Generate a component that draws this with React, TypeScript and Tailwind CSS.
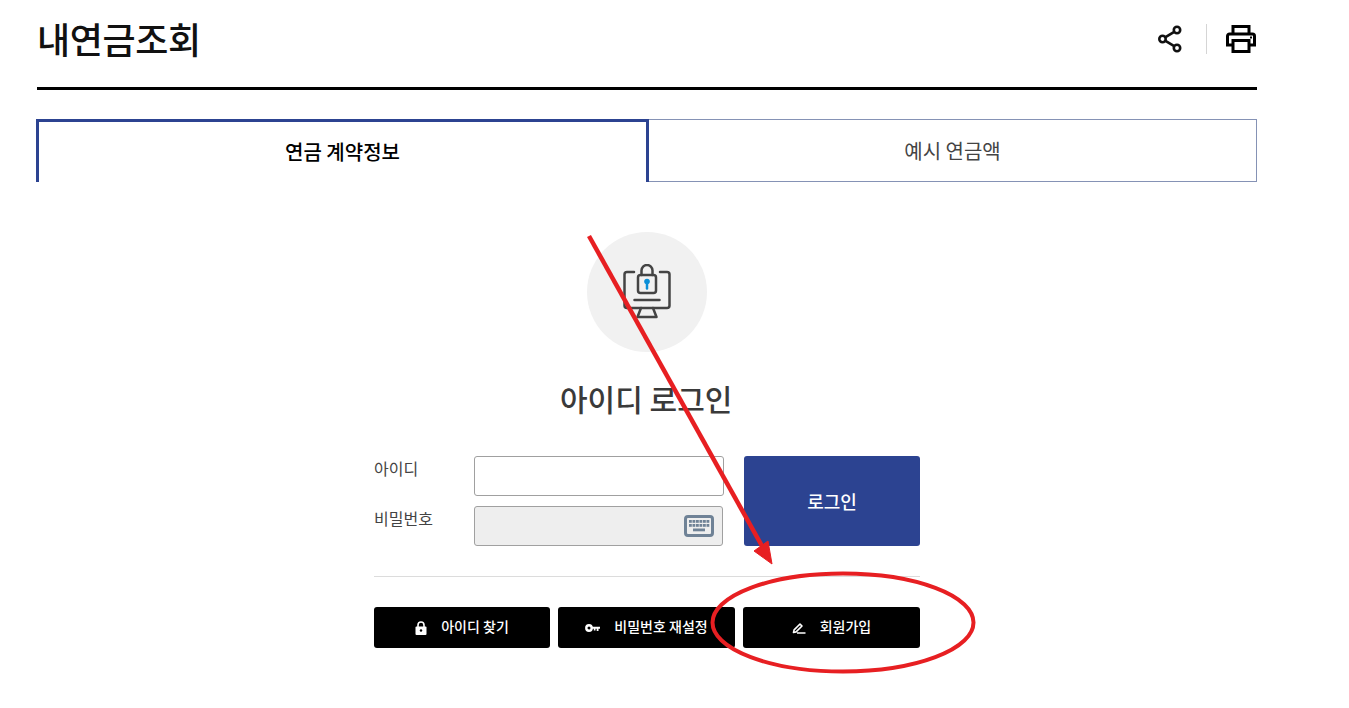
function ShareIcon() {
  return (
    <svg width="26" height="28" viewBox="0 0 26 28" fill="none" stroke="#111" strokeWidth="2.600">
      <circle cx="5.500" cy="14" r="3.200" />
      <circle cx="20" cy="5" r="3.200" />
      <circle cx="20" cy="23" r="3.200" />
      <path d="M8.500 12.200L17.200 6.800M8.500 15.800L17.200 21.200" />
    </svg>
  );
}

function PrinterIcon() {
  return (
    <svg width="32" height="30" viewBox="0 0 32 30" fill="none">
      <path d="M8 10V2.500h16V10" stroke="#000" strokeWidth="3" />
      <path d="M8 21H2.500V12a2 2 0 0 1 2-2h23a2 2 0 0 1 2 2v9H24" stroke="#000" strokeWidth="3" />
      <path d="M8 16.500h16v11H8z" stroke="#000" strokeWidth="3" />
      <rect x="25" y="12.500" width="2" height="2" fill="#000" />
    </svg>
  );
}

function MonitorLockIcon() {
  return (
    <svg width="48" height="56" viewBox="0 0 48 56" fill="none" stroke="#444" strokeWidth="2.500" strokeLinecap="round" strokeLinejoin="round">
      <path d="M11 8H4a2.500 2.500 0 0 0-2.500 2.500v31A2.500 2.500 0 0 0 4 44h40a2.500 2.500 0 0 0 2.500-2.500v-31A2.500 2.500 0 0 0 44 8h-7" />
      <rect x="15" y="11" width="18" height="18" rx="2.500" />
      <path d="M18.500 11V6.500a5.500 5.500 0 0 1 11 0V11" />
      <path d="M11.500 36h25" />
      <path d="M18 44l-3.500 9h19L30 44" />
      <circle cx="24" cy="17.500" r="2.800" fill="#0a8fd8" stroke="none" />
      <path d="M24 18.500v6" stroke="#0a8fd8" />
    </svg>
  );
}

function KeyboardIcon() {
  const keys = [0, 1, 2, 3, 4, 5];
  return (
    <svg width="30" height="22" viewBox="0 0 30 22">
      <rect x="1.500" y="1.500" width="27" height="19" rx="2.500" fill="#eeeeee" stroke="#6f8296" strokeWidth="3" />
      {keys.map((k) => (
        <rect key={`a${k}`} x={5 + k * 3.500} y="5" width="2.800" height="2.800" fill="#6f8296" />
      ))}
      {keys.map((k) => (
        <rect key={`b${k}`} x={5 + k * 3.500} y="9" width="2.800" height="2.800" fill="#6f8296" />
      ))}
      <rect x="9" y="13.500" width="12" height="2.800" fill="#6f8296" />
    </svg>
  );
}

function LockIcon() {
  return (
    <svg width="12" height="14" viewBox="0 0 12 14">
      <path d="M3 6V4a3 3 0 0 1 6 0v2" fill="none" stroke="#fff" strokeWidth="1.600" />
      <rect x="0.500" y="5.500" width="11" height="8.500" rx="1" fill="#fff" />
      <circle cx="6" cy="9.500" r="1.200" fill="#000" />
    </svg>
  );
}

function KeyIcon() {
  return (
    <svg width="15" height="8" viewBox="0 0 15 8">
      <circle cx="4" cy="4" r="2.700" fill="none" stroke="#fff" strokeWidth="2.400" />
      <path d="M6 2.800h9v2h-1.500V7h-1.800V4.800h-1.200V6.500H8.800V4.800H6z" fill="#fff" />
    </svg>
  );
}

function PencilIcon() {
  return (
    <svg width="14" height="12" viewBox="0 0 14 12" fill="none">
      <path d="M1.500 10.500l.6-2.600L8 2l2 2-5.900 5.900z" fill="#000" stroke="#fff" strokeWidth="1.600" strokeLinejoin="round" />
      <path d="M5 11h8.500" stroke="#fff" strokeWidth="1.500" />
    </svg>
  );
}

function ActionButton({ icon, label, className }: { icon: React.ReactNode; label: string; className: string }) {
  return (
    <button className={`h-[41px] bg-black rounded-[3px] text-white text-[14px] font-medium flex items-center justify-center gap-[14px] ${className}`}>
      {icon}
      <span className="pb-[2px]">{label}</span>
    </button>
  );
}

export default function App() {
  return (
    <div className="relative w-[1349px] h-[708px] overflow-hidden bg-white pl-[37px] font-['Noto_Sans_CJK_KR','Noto_Sans',sans-serif]">
      <div className="w-[1220px]">
        {/* Title */}
        <header className="h-[90px] border-b-[3px] border-black flex items-start justify-between">
          <h1 className="mt-[11px] text-[36px] leading-[54px] font-medium text-[#111] tracking-[-0.4px]">내연금조회</h1>
          <div className="flex items-center mt-[24px]">
            <ShareIcon />
            <div className="w-px h-[30px] bg-[#d5d5d5] ml-[23px] mr-[18px]" />
            <PrinterIcon />
          </div>
        </header>

        {/* Tabs */}
        <div className="flex mt-[29px] h-[63px] -ml-px">
          <div className="w-[613px] border-t-[3px] border-x-[3px] border-[#2c4391] flex items-center justify-center text-[20px] font-medium text-black">
            연금 계약정보
          </div>
          <div className="flex-1 border-t border-r border-b border-[#8592b5] flex items-center justify-center text-[20px] text-[#444]">
            예시 연금액
          </div>
        </div>

        {/* Login */}
        <div className="ml-[337px] w-[546px] flex flex-col">
          <div className="mt-[50px] ml-[213px] w-[120px] h-[120px] rounded-full bg-[#f1f1f1] flex items-center justify-center">
            <MonitorLockIcon />
          </div>
          <h2 className="mt-[23px] ml-[186px] text-[30px] leading-[46px] font-medium text-[#3a3a3a]">아이디 로그인</h2>

          <div className="mt-[35px] flex">
            <div className="w-[100px] text-[16px] text-[#444]">
              <div className="h-[50px] leading-[24px]">아이디</div>
              <div className="h-[40px] leading-[24px]">비밀번호</div>
            </div>
            <div className="w-[250px] flex flex-col gap-[10px]">
              <input className="w-[250px] h-[40px] rounded-[3px] border border-[#a0a0a0] bg-white" />
              <div className="w-[249px] h-[40px] rounded-[3px] border border-[#a0a0a0] bg-[#eeeeee] flex items-center justify-end pr-[8px]">
                <KeyboardIcon />
              </div>
            </div>
            <button className="ml-[20px] w-[176px] h-[90px] rounded-[3px] bg-[#2c4391] text-white text-[18px] font-medium">로그인</button>
          </div>

          <div className="mt-[30px] border-t border-[#dcdcdc]" />

          <div className="mt-[30px] flex gap-[8px]">
            <ActionButton icon={<LockIcon />} label="아이디 찾기" className="w-[176px]" />
            <ActionButton icon={<KeyIcon />} label="비밀번호 재설정" className="w-[177px]" />
            <ActionButton icon={<PencilIcon />} label="회원가입" className="w-[177px]" />
          </div>
        </div>
      </div>

      {/* Red annotation drawn over the page */}
      <svg className="absolute left-0 top-0 pointer-events-none" width="1349" height="708" fill="none">
        <path d="M589 236L762 546" stroke="#e71f22" strokeWidth="4.500" />
        <path d="M754 551L768 541L772 564z" fill="#e71f22" stroke="#e71f22" strokeWidth="1" />
        <ellipse cx="843" cy="622.500" rx="130.500" ry="49" stroke="#e71f22" strokeWidth="4" />
      </svg>
    </div>
  );
}
